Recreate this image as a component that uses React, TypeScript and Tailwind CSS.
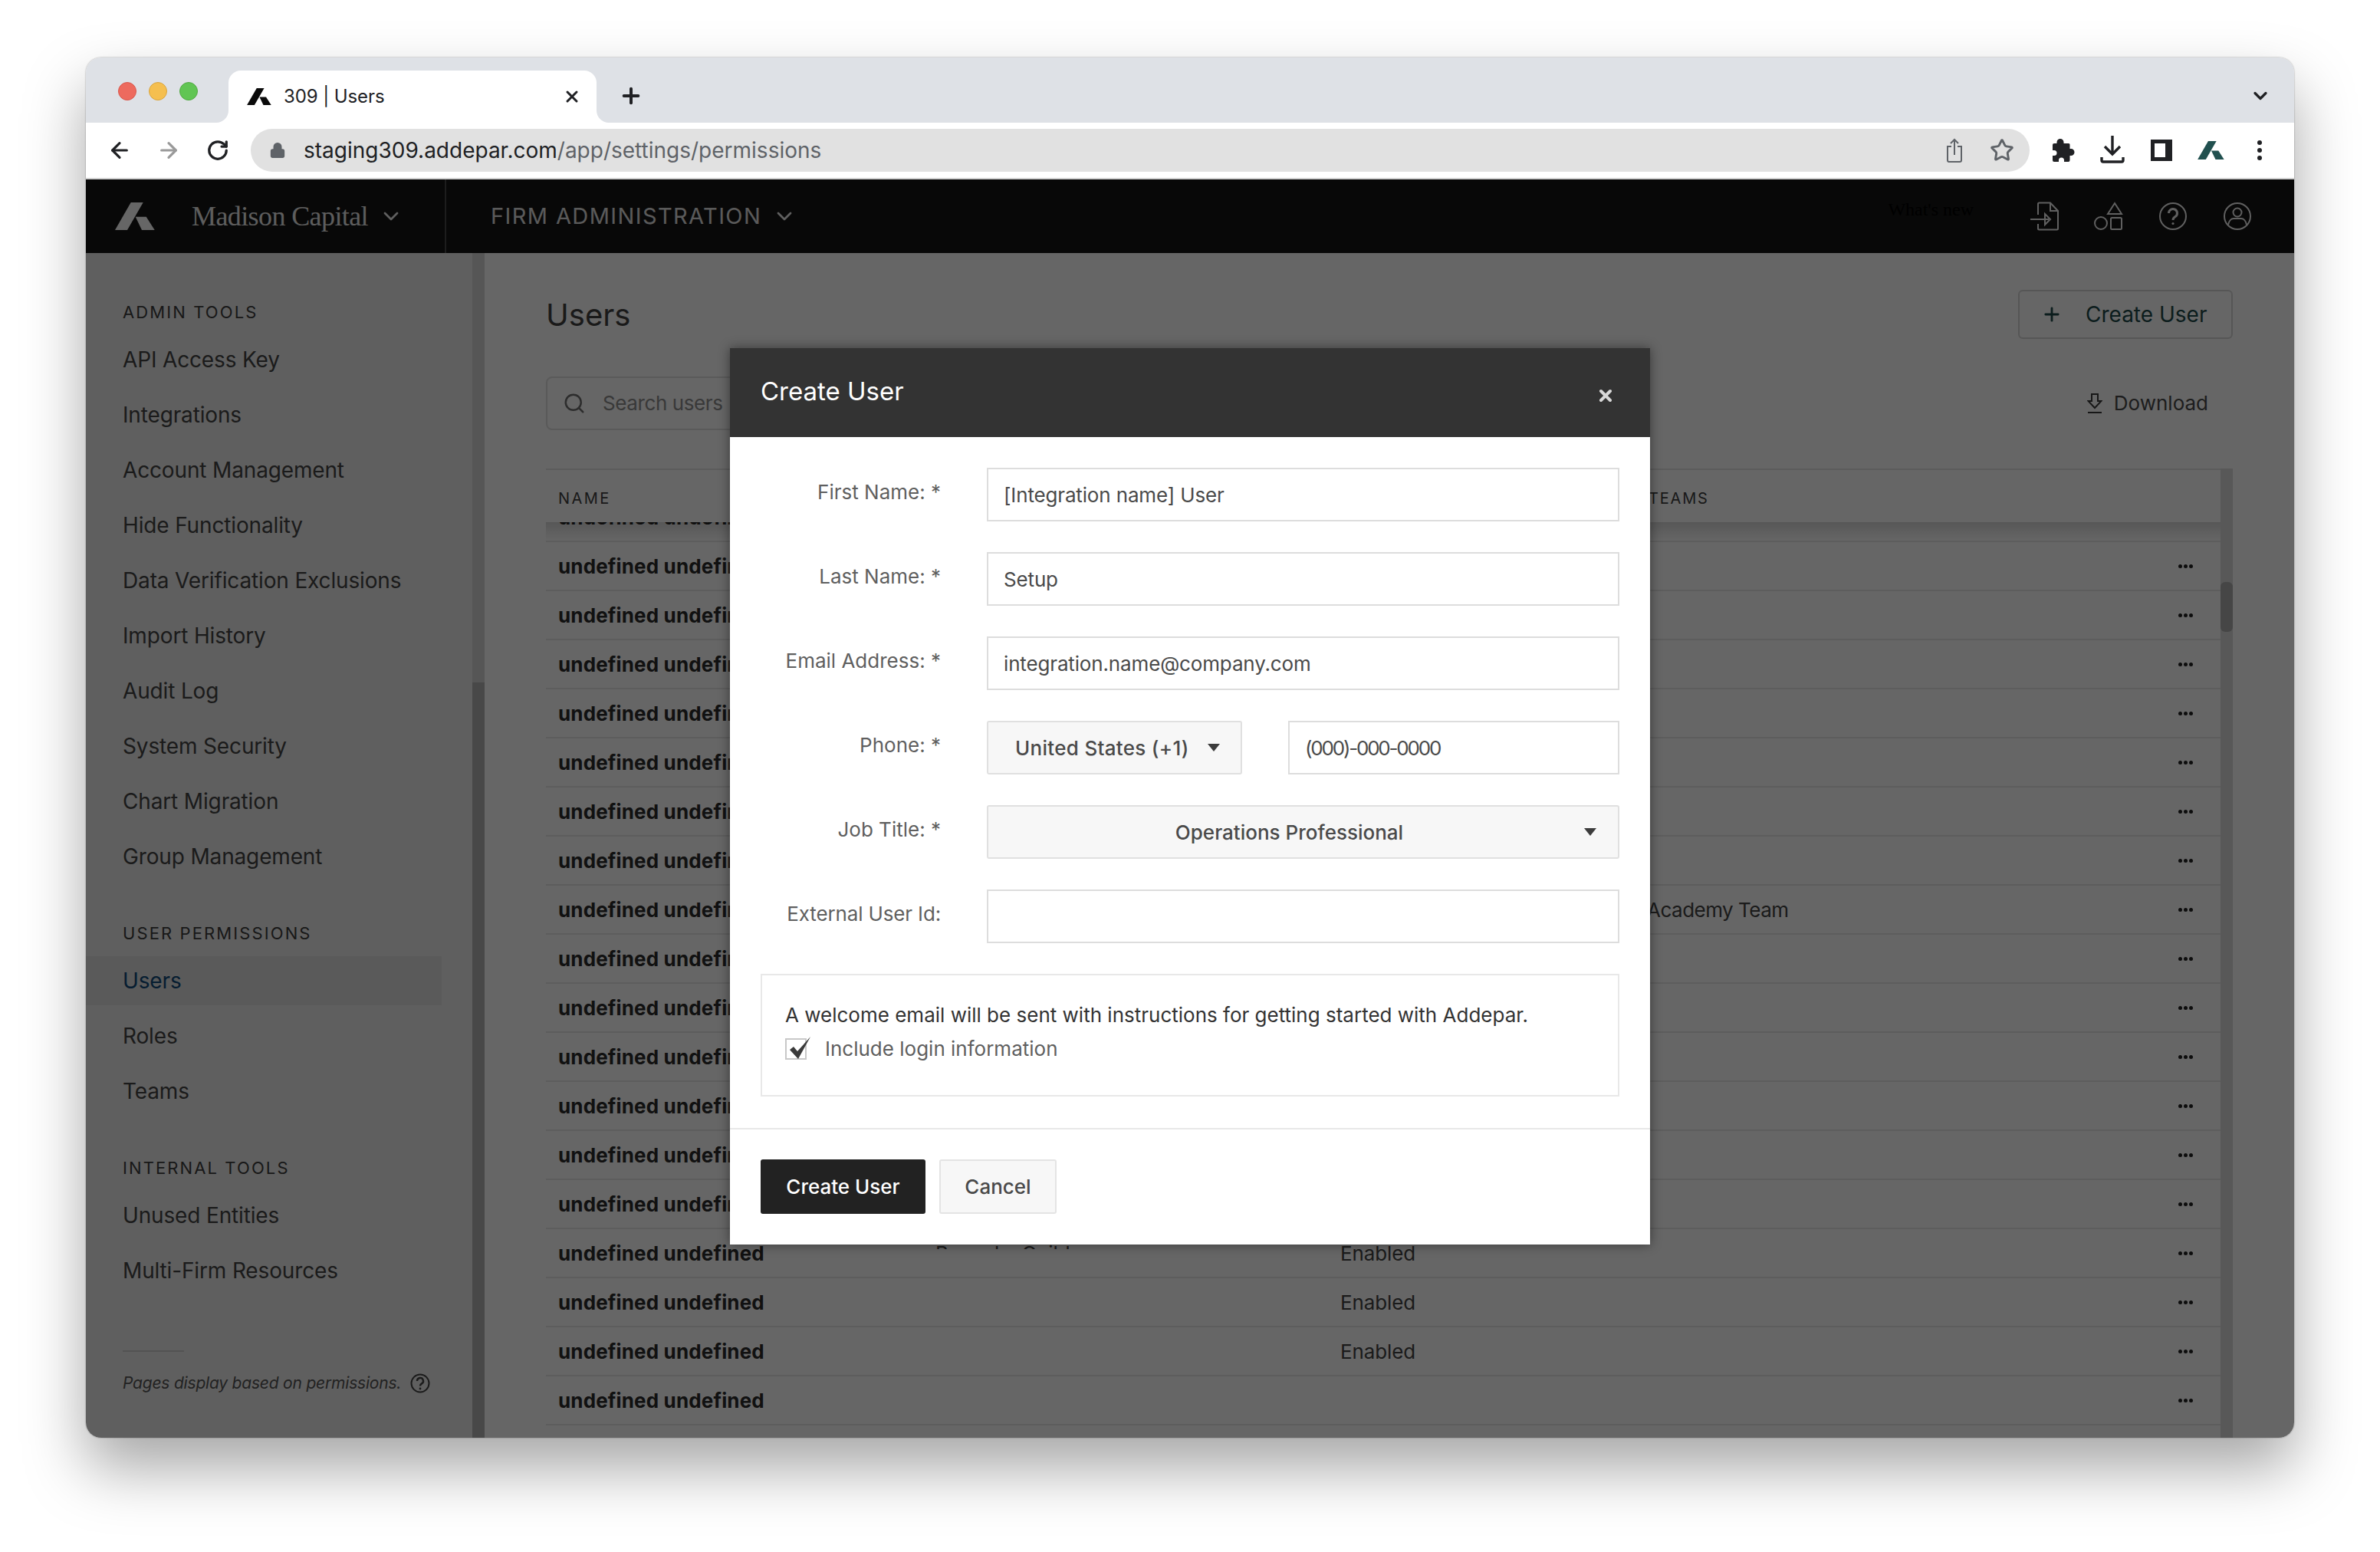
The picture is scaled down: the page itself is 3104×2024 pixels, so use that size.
import React from "react";
import { ArrowLeft, ArrowRight, RotateCw, Lock, Plus, X, ChevronDown, Star, Search } from "lucide-react";

const Logo = ({ className, fill }: { className: string; fill: string }) => (
  <svg viewBox="0 0 52 36" className={className} fill={fill}>
    <path d="M20.7 0H36.7L16 36H0Z" />
    <path d="M26.7 18.7H40.7L51.7 36H35Z" />
  </svg>
);

const NavHead = ({ children, className = "" }: { children: React.ReactNode; className?: string }) => (
  <div className={`h-[52px] flex items-center pl-[48px] text-[22px] tracking-[2.1px] text-[#3d3d3d] ${className}`}>{children}</div>
);

const NavItem = ({ children, active }: { children: React.ReactNode; active?: boolean }) => (
  <div className="h-[72px] flex items-center">
    <div className={`h-[64px] w-[464px] flex items-center pl-[48px] text-[28px] tracking-[-0.15px] ${active ? "bg-[#e0e0e0] text-[#0f4a7a]" : "text-[#454545]"}`}>{children}</div>
  </div>
);

const rows: { status?: string; team?: string; role?: string }[] = [
  {}, {}, {}, {}, {}, {}, {}, {}, { team: "Academy Team" }, {}, {}, {}, {}, {}, {},
  { status: "Enabled", role: "Bespoke Guild" }, { status: "Enabled" }, { status: "Enabled" }, {}, {},
];

const Field = ({ label, children, mt = "mt-[40px]", labelClass = "" }: { label: string; children: React.ReactNode; mt?: string; labelClass?: string }) => (
  <div className={`flex ${mt}`}>
    <div className={`w-[335px] pr-[60px] pt-[16px] text-right text-[26px] leading-[32px] text-[#5f5f5f] shrink-0 ${labelClass}`}>{label}</div>
    <div className="flex-1 flex">{children}</div>
  </div>
);

const Input = ({ value, className = "w-full tracking-[-0.15px]" }: { value?: string; className?: string }) => (
  <div className={`h-[70px] border-2 border-[#dddddd] flex items-center pl-[20px] text-[26px] text-[#4a4a4a] bg-white ${className}`}>{value}</div>
);

const Caret = () => (
  <svg viewBox="0 0 16 10" className="w-[16px] h-[10px]" fill="#3c3c3c"><path d="M0 0H16L8 10Z" /></svg>
);

const ToolSlot = ({ children }: { children: React.ReactNode }) => (
  <div className="w-[64px] flex items-center justify-center">{children}</div>
);

export default function App() {
  return (
    <div className="w-[3104px] h-[2024px] bg-white overflow-hidden pt-[75px] pl-[112px] [font-family:Inter,'Liberation_Sans',sans-serif]">
      <div className="relative w-[2880px] h-[1800px] rounded-[20px] overflow-hidden flex flex-col shadow-[0_40px_80px_rgba(0,0,0,0.35),0_0_2px_rgba(0,0,0,0.4)]">
        {/* tab strip */}
        <div className="h-[85px] shrink-0 bg-[#dee1e6] flex items-end pl-[186px] relative">
          <div className="absolute left-[42px] top-[32px] flex gap-[16px]">
            <div className="w-[24px] h-[24px] rounded-full bg-[#ed6a5e] border border-[#d9574c]" />
            <div className="w-[24px] h-[24px] rounded-full bg-[#f5bf4f] border border-[#d9a53f]" />
            <div className="w-[24px] h-[24px] rounded-full bg-[#61c554] border border-[#52a844]" />
          </div>
          <div className="relative w-[480px] h-[68px] bg-white rounded-t-[16px] flex items-center pl-[24px] pr-[20px] text-[24px] tracking-[-0.1px] text-[#202124]">
            <svg viewBox="0 0 16 16" className="absolute -left-[16px] bottom-0 w-[16px] h-[16px]" fill="#ffffff"><path d="M16 0V16H0A16 16 0 0 0 16 0Z" /></svg>
            <svg viewBox="0 0 16 16" className="absolute -right-[16px] bottom-0 w-[16px] h-[16px]" fill="#ffffff"><path d="M0 0V16H16A16 16 0 0 1 0 0Z" /></svg>
            <Logo className="w-[32px] h-[22px] mr-[16px] shrink-0" fill="#0a0a0a" />
            <span>309 | Users</span>
            <X className="ml-auto w-[24px] h-[24px]" strokeWidth={3} color="#202124" />
          </div>
          <Plus className="w-[32px] h-[32px] ml-[29px] mb-[19px]" strokeWidth={3} color="#202124" />
          <ChevronDown className="absolute right-[30px] top-[36px] w-[28px] h-[28px]" strokeWidth={2.8} color="#202124" />
        </div>
        {/* toolbar */}
        <div className="h-[74px] shrink-0 bg-white border-b-2 border-[#d0d0d0] flex items-center pl-[28px]">
          <ArrowLeft className="w-[32px] h-[32px]" strokeWidth={2.4} color="#202124" />
          <ArrowRight className="w-[32px] h-[32px] ml-[32px]" strokeWidth={2.4} color="#9a9a9a" />
          <RotateCw className="w-[30px] h-[30px] ml-[33px]" strokeWidth={2.6} color="#202124" />
          <div className="ml-[28px] w-[2320px] h-[56px] rounded-full bg-[#e1e1e1] flex items-center pl-[24px] text-[28px]">
            <Lock className="w-[22px] h-[22px]" fill="#5f6368" color="#5f6368" />
            <span className="ml-[23px] text-[#202124]">staging309.addepar.com</span>
            <span className="text-[#5f6368]">/app/settings/permissions</span>
            <svg viewBox="0 0 24 32" className="ml-auto w-[24px] h-[32px]" fill="none" stroke="#5f6368" strokeWidth="2">
              <path d="M12 22V2M7 7l5-5 5 5M8 11H3v18a2 2 0 0 0 2 2h14a2 2 0 0 0 2-2V11h-5" />
            </svg>
            <Star className="ml-[34px] mr-[20px] w-[32px] h-[32px]" strokeWidth={2.2} color="#5f6368" />
          </div>
          <div className="ml-[12px] flex items-center">
            <ToolSlot>
              <svg viewBox="0 0 30 30" className="w-[30px] h-[30px]" fill="#202124">
                <path d="M11 0a4.500 4.500 0 0 1 4.500 4.500V6H22a1.500 1.500 0 0 1 1.500 1.500V13H25a4.500 4.500 0 0 1 0 9h-1.500v6a2 2 0 0 1-2 2H16v-2a3.500 3.500 0 0 0-7 0v2H3a2 2 0 0 1-2-2v-6h2a3.500 3.500 0 0 0 0-7H1V8a2 2 0 0 1 2-2h3.500V4.500A4.500 4.500 0 0 1 11 0Z" />
              </svg>
            </ToolSlot>
            <ToolSlot>
              <svg viewBox="0 0 32 32" className="w-[32px] h-[32px] overflow-visible" fill="none" stroke="#202124" strokeWidth="3.400">
                <path d="M16 -3V21M6 11l10 10 10-10M2 25v4a2 2 0 0 0 2 2h24a2 2 0 0 0 2-2v-4" />
              </svg>
            </ToolSlot>
            <ToolSlot>
              <div className="w-[28px] h-[28px] border-[5px] border-r-[9px] border-[#202124]" />
            </ToolSlot>
            <ToolSlot>
              <Logo className="w-[35px] h-[24px]" fill="#21504f" />
            </ToolSlot>
            <ToolSlot>
              <svg viewBox="0 0 6 26" className="w-[6px] h-[26px]" fill="#202124">
                <circle cx="3" cy="3" r="3" />
                <circle cx="3" cy="13" r="3" />
                <circle cx="3" cy="23" r="3" />
              </svg>
            </ToolSlot>
          </div>
        </div>
        {/* app */}
        <div className="flex-1 min-h-0 relative flex flex-col">
          <div className="h-[96px] shrink-0 bg-[#141414] flex items-center">
            <div className="w-[470px] h-full border-r-2 border-[#4a4a4a] flex items-center pl-[38px] shrink-0">
              <Logo className="w-[52px] h-[36px]" fill="#ffffff" />
              <span className="ml-[48px] text-[36px] text-[#e8e8e8] tracking-[-0.6px] [font-family:'Liberation_Serif',serif]">Madison Capital</span>
              <ChevronDown className="ml-[14px] w-[32px] h-[32px]" strokeWidth={2} color="#eeeeee" />
            </div>
            <span className="ml-[58px] text-[29px] tracking-[1.4px] text-[#e0e0e0]">FIRM ADMINISTRATION</span>
            <ChevronDown className="ml-[14px] w-[32px] h-[32px]" strokeWidth={2} color="#eeeeee" />
            <span className="ml-auto mr-[74px] -mt-[18px] text-[24px] text-black [font-family:'Liberation_Serif',serif]">What's new</span>
            <div className="flex items-center pr-[56px] gap-[48px]">
              <svg viewBox="0 0 36 36" className="w-[36px] h-[36px] overflow-visible" fill="none" stroke="#f0f0f0" strokeWidth="2">
                <path d="M10 16V2a1.500 1.500 0 0 1 1.500-1.500H26L36 11v23a1.500 1.500 0 0 1-1.500 1.500h-23A1.500 1.500 0 0 1 10 34v-6M26 .5V11h10M0 22h24M19 15l7 7-7 7z" />
              </svg>
              <svg viewBox="0 0 36 36" className="w-[36px] h-[36px] overflow-visible" fill="none" stroke="#f0f0f0" strokeWidth="2">
                <path d="M26 1l9 14H17z" />
                <circle cx="8" cy="27" r="8" />
                <rect x="21" y="20" width="14" height="15" rx="1.500" />
              </svg>
              <svg viewBox="0 0 36 36" className="w-[36px] h-[36px]" fill="none" stroke="#f0f0f0" strokeWidth="2">
                <circle cx="18" cy="18" r="17" />
                <path d="M12.500 14a5.500 5.500 0 1 1 8.500 4.600c-2 1.300-3 2.400-3 4.400" strokeWidth="3" />
                <circle cx="18" cy="27.500" r="1.600" fill="#f0f0f0" stroke="none" />
              </svg>
              <svg viewBox="0 0 36 36" className="w-[36px] h-[36px]" fill="none" stroke="#f0f0f0" strokeWidth="2">
                <circle cx="18" cy="18" r="17" />
                <circle cx="18" cy="13" r="5.500" />
                <path d="M6 29c1-5 4-8 7-8h10c3 0 6 3 7 8" />
              </svg>
            </div>
          </div>
          <div className="flex-1 min-h-0 flex">
            {/* sidebar */}
            <div className="w-[504px] shrink-0 bg-[#eeeeee] relative">
              <div className="pt-[51px]">
                <NavHead>ADMIN TOOLS</NavHead>
                {["API Access Key", "Integrations", "Account Management", "Hide Functionality", "Data Verification Exclusions", "Import History", "Audit Log", "System Security", "Chart Migration", "Group Management"].map((t) => (
                  <NavItem key={t}>{t}</NavItem>
                ))}
                <NavHead className="mt-[38px]">USER PERMISSIONS</NavHead>
                <NavItem active>Users</NavItem>
                <NavItem>Roles</NavItem>
                <NavItem>Teams</NavItem>
                <NavHead className="mt-[38px]">INTERNAL TOOLS</NavHead>
                <NavItem>Unused Entities</NavItem>
                <NavItem>Multi-Firm Resources</NavItem>
                <div className="ml-[48px] mt-[68px] w-[80px] h-[2px] bg-[#cfcfcf]" />
                <div className="ml-[48px] mt-[25px] flex items-center text-[21px] italic tracking-[-0.2px] text-[#555555]">
                  Pages display based on permissions.
                  <svg viewBox="0 0 26 26" className="ml-[12px] w-[26px] h-[26px]" fill="none" stroke="#444444" strokeWidth="2">
                    <circle cx="13" cy="13" r="11.500" />
                    <path d="M9 10a4 4 0 1 1 6 3.400c-1.400.8-2 1.600-2 3" strokeWidth="2.400" />
                    <circle cx="13" cy="20" r="1.400" fill="#444444" stroke="none" />
                  </svg>
                </div>
              </div>
            </div>
            <div className="w-[16px] shrink-0 bg-[#d6d6d6] flex flex-col">
              <div className="mt-[560px] flex-1 bg-[#b4b4b4]" />
            </div>
            {/* main */}
            <div className="flex-1 min-w-0 bg-white px-[80px] flex flex-col">
              <div className="h-[113px] mt-[48px] flex items-start justify-between">
                <div className="text-[40px] leading-[66px] text-[#434343]">Users</div>
                <div className="w-[280px] h-[64px] rounded-[6px] border-2 border-[#d8d8d8] flex items-center pl-[28px] text-[28px] text-[#1e4a4a]">
                  <Plus className="w-[28px] h-[28px]" strokeWidth={2.4} color="#1e4a4a" />
                  <span className="ml-[30px]">Create User</span>
                </div>
              </div>
              <div className="h-[70px] flex items-center justify-between">
                <div className="w-[460px] h-[70px] rounded-[8px] border-2 border-[#e0e0e0] flex items-center pl-[20px] text-[26px] tracking-[-0.4px] text-[#8e8e8e]">
                  <Search className="w-[30px] h-[30px]" strokeWidth={2} color="#707070" />
                  <span className="ml-[22px] -mt-[2px]">Search users</span>
                </div>
                <div className="flex items-center pr-[32px] text-[26px] text-[#4a4a4a]">
                  <svg viewBox="0 0 20 26" className="w-[20px] h-[26px]" fill="none" stroke="#3a3a3a" strokeWidth="2">
                    <path d="M6 1h8v9h4.500L10 19 1.500 10H6zM1 25h18" />
                  </svg>
                  <span className="ml-[15px] -mt-[2px]">Download</span>
                </div>
              </div>
              {/* table */}
              <div className="mt-[50px] flex-1 min-h-0 flex flex-col relative overflow-hidden">
                <div className="h-[70px] shrink-0 border-t-2 border-[#e4e4e4] flex items-center text-[20px] tracking-[2.4px] text-[#404040] pr-[16px] pl-[16px]">
                  <div className="w-[1422px] pt-[6px]">NAME</div>
                  <div className="pt-[6px] tracking-[1.8px]">TEAMS</div>
                </div>
                <div className="flex-1 min-h-0 overflow-hidden relative pr-[16px]">
                  <div className="-mt-[38px]">
                    {rows.map((r, i) => (
                      <div key={i} className="h-[64px] border-b-2 border-[#e8e8e8] flex items-center text-[26px] tracking-[-0.1px] text-[#444444] pl-[16px] relative">
                        <div className="w-[492px] font-bold text-[#2b2b2b] whitespace-nowrap tracking-[0.15px]">undefined undefined</div>
                        <div className="w-[528px] relative">
                          {r.role}
                          {r.role && <div className="absolute -left-[11px] top-[14px] w-[418px] h-[30px] bg-white" />}
                        </div>
                        <div className="w-[400px]">{r.status}</div>
                        <div className="tracking-[-0.5px]">{r.team}</div>
                        <div className="absolute right-[36px] flex gap-[2px]">
                          <span className="w-[5px] h-[5px] rounded-full bg-[#222222]" />
                          <span className="w-[5px] h-[5px] rounded-full bg-[#222222]" />
                          <span className="w-[5px] h-[5px] rounded-full bg-[#222222]" />
                        </div>
                      </div>
                    ))}
                  </div>
                  <div className="absolute left-0 right-[16px] top-0 h-[24px] bg-gradient-to-b from-black/15 to-transparent" />
                </div>
                <div className="absolute right-0 top-0 bottom-0 w-[16px] bg-[#dcdcdc]">
                  <div className="mt-[148px] h-[65px] rounded-[6px] bg-[#b0b0b0]" />
                </div>
              </div>
            </div>
          </div>
          {/* overlay */}
          <div className="absolute inset-0 bg-black/60" />
          {/* modal */}
          <div className="absolute left-[840px] top-[220px] w-[1200px] h-[1169px] bg-white shadow-[0_0_14px_rgba(0,0,0,0.45)] flex flex-col">
            <div className="h-[116px] shrink-0 bg-[#333333] flex items-center px-[40px] justify-between">
              <span className="text-[33px] text-white -mt-[2px]">Create User</span>
              <X className="w-[24px] h-[24px] mt-[8px] mr-[6px]" strokeWidth={4} color="#d8d8d8" />
            </div>
            <div className="flex-1 pr-[40px]">
              <Field label="First Name: *" mt="mt-[40px]"><Input value="[Integration name] User" /></Field>
              <Field label="Last Name: *"><Input value="Setup" /></Field>
              <Field label="Email Address: *"><Input value="integration.name@company.com" /></Field>
              <Field label="Phone: *">
                <div className="w-[333px] h-[70px] border-2 border-[#e0e0e0] rounded-[3px] bg-[#f7f7f7] flex items-center pl-[35px] text-[26px] font-medium tracking-[0.3px] text-[#4a4a4a]">
                  United States (+1)
                  <span className="ml-[24px]"><Caret /></span>
                </div>
                <Input value="(000)-000-0000" className="ml-[60px] flex-1 tracking-[-2.2px]" />
              </Field>
              <Field label="Job Title: *">
                <div className="w-full h-[70px] border-2 border-[#e0e0e0] rounded-[3px] bg-[#f7f7f7] flex items-center pr-[28px] text-[26px] font-medium text-[#4a4a4a]">
                  <span className="flex-1 text-center pl-[8px]">Operations Professional</span>
                  <Caret />
                </div>
              </Field>
              <Field label="External User Id:" labelClass="tracking-[-0.15px]"><Input /></Field>
              <div className="ml-[40px] mt-[40px] h-[160px] border-2 border-[#e8e8e8] pl-[30px] pt-[32px] text-[26px] leading-[40px]">
                <div className="text-[#333333]">A welcome email will be sent with instructions for getting started with Addepar.</div>
                <div className="flex items-center text-[#5f5f5f] mt-[4px]">
                  <div className="relative w-[28px] h-[28px] border-2 border-[#c8c8c8]">
                    <svg viewBox="0 0 34 32" className="absolute left-0 -top-[4px] w-[34px] h-[32px]" fill="#3a3a3a">
                      <path d="M4 17L9 13L14 19L31 0L15 29Z" />
                    </svg>
                  </div>
                  <span className="ml-[24px]">Include login information</span>
                </div>
              </div>
            </div>
            <div className="border-t-2 border-[#e8e8e8] h-[152px] shrink-0 flex items-start pt-[39px] pl-[40px]">
              <div className="w-[215px] h-[71px] rounded-[3px] bg-[#222222] text-white text-[26px] font-medium flex items-center justify-center">Create User</div>
              <div className="ml-[18px] w-[153px] h-[71px] rounded-[3px] border-2 border-[#e4e4e4] bg-[#f7f7f7] text-[#4a4a4a] text-[26px] font-medium flex items-center justify-center">Cancel</div>
            </div>
          </div>
        </div>
      </div>
    </div>
  );
}
